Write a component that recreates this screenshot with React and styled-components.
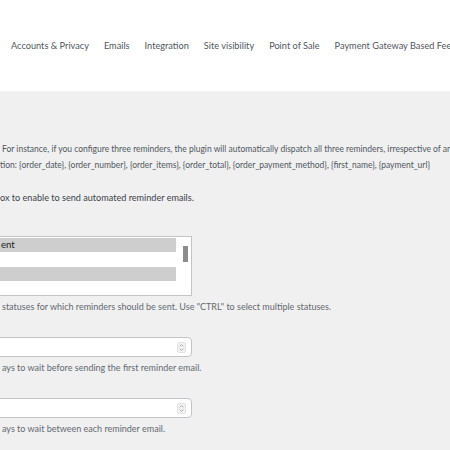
import React from "react";
import styled, { createGlobalStyle } from "styled-components";

const GlobalStyle = createGlobalStyle`
  html, body {
    margin: 0;
    padding: 0;
    width: 450px;
    height: 450px;
    overflow: hidden;
    background: #f0f0f1;
  }
  body {
    font-family: Lato, "Open Sans", sans-serif;
  }
`;

const tabs = [
  "Accounts & Privacy",
  "Emails",
  "Integration",
  "Site visibility",
  "Point of Sale",
  "Payment Gateway Based Fees",
];

const Header = styled.div`
  height: 92px;
  background: #ffffff;
  border-bottom: 1px solid #f4f4f4;
  display: flex;
  align-items: flex-start;
  padding: 39px 0 0 11px;
  box-sizing: border-box;
  overflow: hidden;
`;

const TabList = styled.ul`
  display: flex;
  gap: 15px;
  margin: 0;
  padding: 0;
  list-style: none;
  white-space: nowrap;
`;

const Tab = styled.li`
  font-size: 9.2px;
  line-height: 14px;
  color: #50575e;
`;

const Main = styled.div`
  padding: 49px 0 0 0;
  display: flex;
  flex-direction: column;
  overflow: hidden;
`;

const Note = styled.p`
  margin: 0;
  font-size: 8.5px;
  line-height: 16px;
  color: #50575e;
  white-space: nowrap;
  padding-left: ${(p) => p.$indent || 0}px;
`;

const Lead = styled.p`
  margin: 17px 0 0 0;
  font-size: 9.1px;
  line-height: 16px;
  color: #3c434a;
  white-space: nowrap;
`;

const Field = styled.div`
  margin: ${(p) => p.$top}px 0 0 -10px;
  width: 202px;
`;

const Listbox = styled.div`
  position: relative;
  height: 60px;
  box-sizing: border-box;
  border: 1px solid #c3c4c7;
  background: #ffffff;
  padding: 1px 15px 0 0;
  overflow: hidden;
`;

const Option = styled.div`
  height: 14.4px;
  line-height: 14.4px;
  font-size: 9.6px;
  color: #1d2327;
  background: ${(p) => (p.$selected ? "#cecece" : "transparent")};
  padding-left: 10px;
`;

const Thumb = styled.div`
  position: absolute;
  right: 3px;
  top: 9px;
  width: 5px;
  height: 16px;
  background: #8c8c8c;
`;

const Help = styled.p`
  margin: 4px 0 0 0;
  font-size: 9px;
  line-height: 14px;
  color: #646970;
  white-space: nowrap;
  padding-left: 2px;
`;

const NumberBox = styled.div`
  height: 20px;
  box-sizing: border-box;
  border: 1px solid #c3c4c7;
  border-radius: 4px;
  background: #ffffff;
  display: flex;
  align-items: center;
  justify-content: flex-end;
  padding-right: 5px;
`;

const Spin = () => (
  <svg width="9" height="11" viewBox="0 0 9 11">
    <rect x="0.5" y="0.5" width="8" height="10" rx="1.5" fill="#f3f3f3" stroke="#e2e2e2" />
    <path d="M2.6 4.3 L4.5 2.6 L6.4 4.3" fill="none" stroke="#9a9a9a" strokeWidth="0.8" />
    <path d="M2.6 6.7 L4.5 8.4 L6.4 6.7" fill="none" stroke="#9a9a9a" strokeWidth="0.8" />
  </svg>
);

export default function App() {
  return (
    <>
      <GlobalStyle />
      <Header>
        <TabList>
          {tabs.map((t) => (
            <Tab key={t}>{t}</Tab>
          ))}
        </TabList>
      </Header>
      <Main>
        <Note $indent={2}>
          For instance, if you configure three reminders, the plugin will automatically dispatch all three reminders, irrespective of an
        </Note>
        <Note>
          tion: {"{order_date}"}, {"{order_number}"}, {"{order_items}"}, {"{order_total}"}, {"{order_payment_method}"}, {"{first_name}"}, {"{payment_url}"}
        </Note>
        <Lead>ox to enable to send automated reminder emails.</Lead>

        <Field $top={30}>
          <Listbox>
            <Option $selected>ent</Option>
            <Option />
            <Option $selected />
            <Option />
            <Thumb />
          </Listbox>
        </Field>
        <Help>statuses for which reminders should be sent. Use "CTRL" to select multiple statuses.</Help>

        <Field $top={23}>
          <NumberBox>
            <Spin />
          </NumberBox>
        </Field>
        <Help>ays to wait before sending the first reminder email.</Help>

        <Field $top={23}>
          <NumberBox>
            <Spin />
          </NumberBox>
        </Field>
        <Help>ays to wait between each reminder email.</Help>
      </Main>
    </>
  );
}
